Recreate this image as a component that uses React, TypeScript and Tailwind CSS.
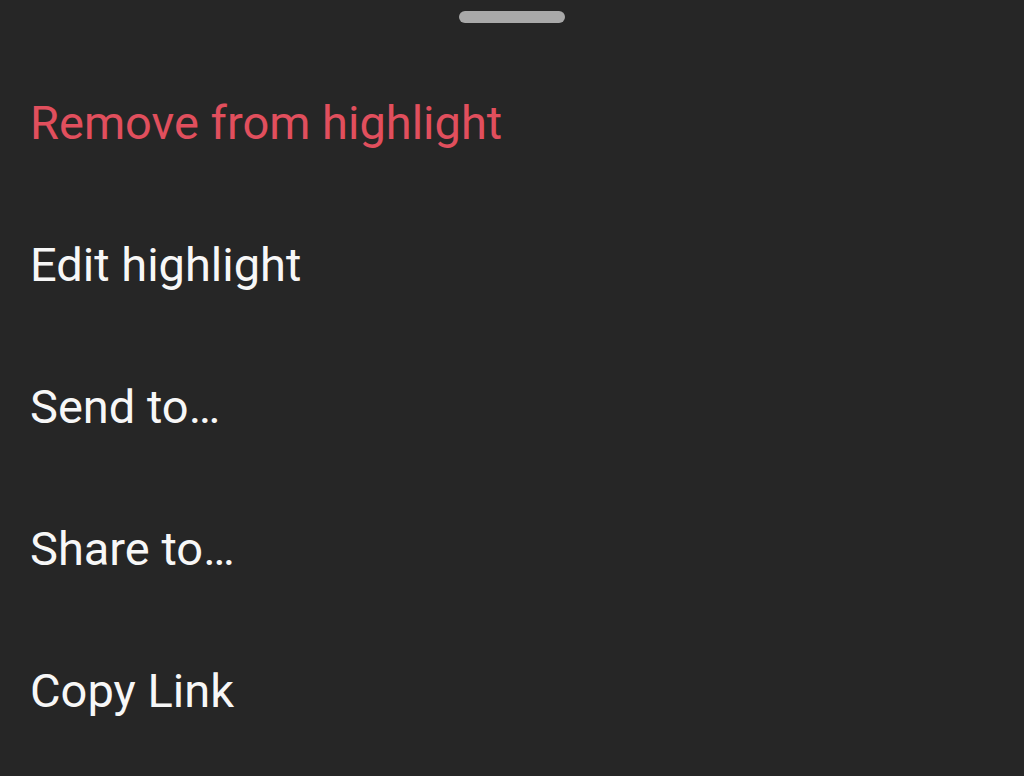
export default function App() {
  const items = [
    { id: "remove", label: "Remove from highlight", danger: true },
    { id: "edit", label: "Edit highlight" },
    { id: "send", label: "Send to…" },
    { id: "share", label: "Share to…" },
    { id: "copy", label: "Copy Link" },
  ];

  return (
    <div
      className="w-[1024px] h-[776px] bg-[#262626] overflow-hidden flex flex-col"
      style={{ fontFamily: "Roboto, 'Noto Sans', sans-serif" }}
    >
      {/* Drag handle */}
      <div className="flex justify-center pt-[11px]">
        <div className="w-[106px] h-[12px] rounded-full bg-[#a9a9a9]" />
      </div>

      {/* Menu */}
      <ul className="flex flex-col pt-[28px]">
        {items.map((item) => (
          <li key={item.id}>
            <button
              className={`w-full h-[142px] flex items-center px-[30px] text-left text-[47px] leading-none ${
                item.danger ? "text-[#e14f5d]" : "text-[#f7f7f7]"
              }`}
            >
              {item.label}
            </button>
          </li>
        ))}
      </ul>
    </div>
  );
}
